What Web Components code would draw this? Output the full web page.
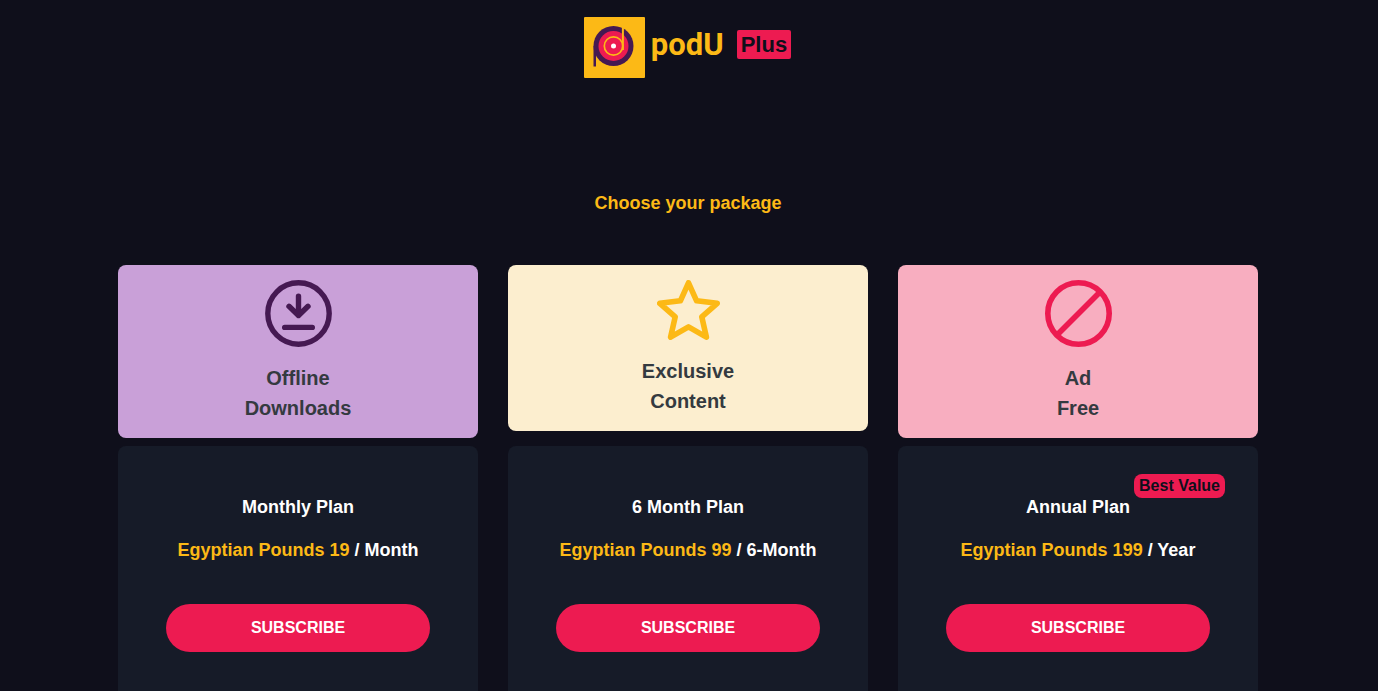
<!DOCTYPE html>
<html lang="en">
<head>
<meta charset="utf-8">
<title>podU Plus</title>
<style>
  html { background: #0f0f1b; scrollbar-width: none; }
  body { margin: 0; padding: 0 2px 0 0; font-family: "Liberation Sans", Arial, sans-serif; font-weight: 700; color: #fff;
    --yellow: #fcb916; --pink: #ed1b51; --ink: #0f0f1b; --panel: #161b28; }
</style>
</head>
<body>
<podu-page></podu-page>

<template id="page">
  <style>
    :host { display: block; }
    h1 { margin: 0; padding: 107px 16px 0; text-align: center; font-size: 18px; line-height: 36px; color: var(--yellow); }
    main { max-width: 1140px; margin: 0 auto; padding: 0 16px 48px; }
    .grid { display: grid; grid-template-columns: repeat(3, minmax(0, 1fr)); gap: 8px 30px; align-items: start; margin-top: 44px; }
  </style>
  <podu-header></podu-header>
  <main>
    <h1>Choose your package</h1>
    <div class="grid">
      <feature-card style="--tint:#c9a0d8">
        <svg slot="icon" width="67" height="67" viewBox="0 0 67 67" fill="none" stroke="#451952" stroke-width="5.400" stroke-linecap="round" stroke-linejoin="round" aria-hidden="true"><circle cx="33.500" cy="33.500" r="30.700"/><path d="M33.500 16.300V35.500M24 26.300l9.500 9.200L43 26.300M19.700 47.400h27.600"/></svg>
        Offline<br>Downloads
      </feature-card>
      <feature-card style="--tint:#fceecf">
        <svg slot="icon" width="63" height="60" viewBox="0 0 63 60" fill="none" stroke="#fcb916" stroke-width="5.600" stroke-linejoin="round" aria-hidden="true"><path d="M31.500 2.800 39.600 20.800 60.200 23.300 44.800 36.800 49.400 57.200 31.500 46.800 13.600 57.200 18.200 36.800 2.800 23.300 23.400 20.800Z"/></svg>
        Exclusive<br>Content
      </feature-card>
      <feature-card style="--tint:#f8aec0">
        <svg slot="icon" width="67" height="67" viewBox="0 0 67 67" fill="none" stroke="#ed1b51" stroke-width="5.600" aria-hidden="true"><circle cx="33.500" cy="33.500" r="30.700"/><path d="M12 55 55 12"/></svg>
        Ad<br>Free
      </feature-card>
      <plan-card><span slot="name">Monthly Plan</span><span slot="price">Egyptian Pounds 19</span><span slot="period">/ Month</span></plan-card>
      <plan-card><span slot="name">6 Month Plan</span><span slot="price">Egyptian Pounds 99</span><span slot="period">/ 6-Month</span></plan-card>
      <plan-card><span slot="name">Annual Plan</span><span slot="price">Egyptian Pounds 199</span><span slot="period">/ Year</span><plan-badge slot="badge">Best Value</plan-badge></plan-card>
    </div>
  </main>
</template>

<template id="header">
  <style>
    :host { display: block; padding-top: 17px; }
    header { display: flex; justify-content: center; align-items: center; padding-right: 1px; }
    svg { display: block; }
    .brand { display: flex; align-items: baseline; gap: 13px; margin: 0 0 6px 6px; }
    .name { font: 700 31px/36px Roboto, sans-serif; color: var(--yellow); }
    .plus { padding: 0 4px; border-radius: 2px; background: var(--pink); color: var(--ink); font-size: 22px; line-height: 29px; }
    .brand { align-items: center; }
  </style>
  <header>
    <svg width="61" height="61" viewBox="0 0 61 61" aria-hidden="true">
      <rect width="61" height="61" rx="1" fill="#fcb916"/>
      <circle cx="29.500" cy="29" r="20" fill="#451952"/>
      <path d="M9.500 29h2.500v20.500H9.500z" fill="#451952"/>
      <circle cx="29.500" cy="29" r="15" fill="#ed1b51"/>
      <circle cx="29.500" cy="29" r="9.200" fill="none" stroke="#fcb916" stroke-width="1.700"/>
      <path d="M38.900 8v25" fill="none" stroke="#fcb916" stroke-width="2"/>
      <circle cx="29.500" cy="29" r="2.500" fill="#fff"/>
    </svg>
    <div class="brand"><span class="name">podU</span><span class="plus">Plus</span></div>
  </header>
</template>

<template id="feature">
  <style>
    :host { display: flex; flex-direction: column; align-items: center; gap: 16px; padding: 15px; border-radius: 8px; background: var(--tint); color: #343a40; }
    ::slotted(svg) { display: block; }
    p { margin: 0; text-align: center; font-size: 20px; line-height: 30px; }
  </style>
  <slot name="icon"></slot>
  <p><slot></slot></p>
</template>

<template id="plan">
  <style>
    :host { display: block; position: relative; padding: 48px; border-radius: 8px; background: var(--panel); text-align: center; font-size: 18px; line-height: 27px; }
    h2, p { margin: 0 0 16px; font: inherit; }
    p { margin: 0 -32px 40px; }
    .price { color: var(--yellow); }
    button { display: block; width: 100%; height: 48px; padding: 0 0 2px; border: 0; border-radius: 24px; background: var(--pink); color: #fff; font: inherit; font-size: 16px; cursor: pointer; }
    ::slotted(plan-badge) { position: absolute; top: 28px; right: 33px; }
  </style>
  <slot name="badge"></slot>
  <h2><slot name="name"></slot></h2>
  <p><span class="price"><slot name="price"></slot></span> <slot name="period"></slot></p>
  <button type="button">SUBSCRIBE</button>
</template>

<template id="badge">
  <style>
    :host { display: block; padding: 0 5px; border-radius: 8px; background: var(--pink); color: var(--ink); font-size: 16px; line-height: 24px; }
  </style>
  <slot></slot>
</template>

<script>
  const define = (tag, id) => customElements.define(tag, class extends HTMLElement {
    constructor() {
      super();
      this.attachShadow({ mode: "open" }).append(document.getElementById(id).content.cloneNode(true));
    }
  });
  define("plan-badge", "badge");
  define("plan-card", "plan");
  define("feature-card", "feature");
  define("podu-header", "header");
  define("podu-page", "page");
</script>
</body>
</html>
